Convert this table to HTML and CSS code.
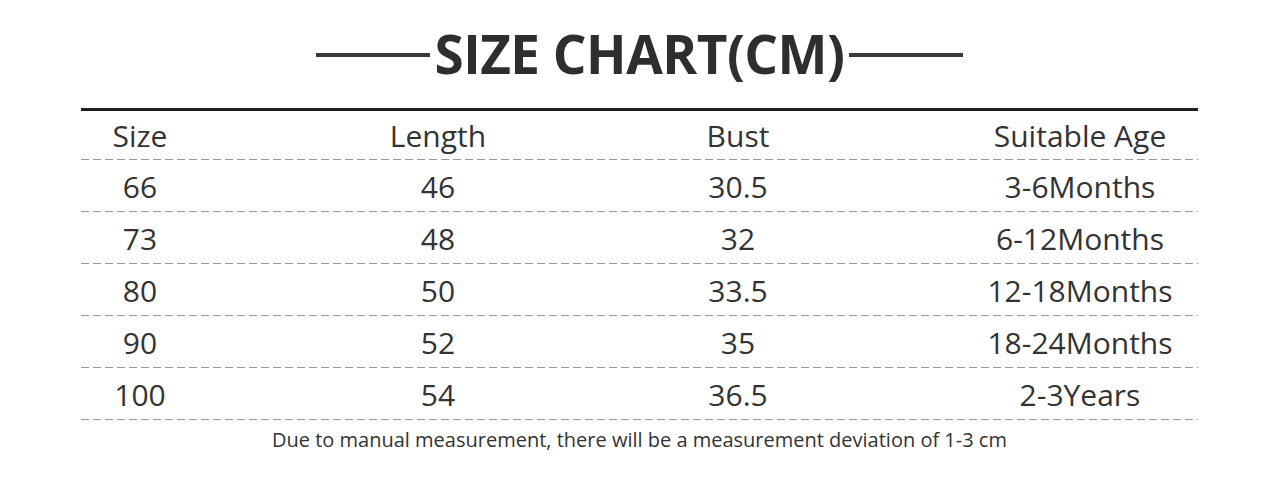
FILE: index.html
```html
<!DOCTYPE html>
<html lang="en">
<head>
    <meta charset="UTF-8">
    <title>Size Chart</title>
    <link rel="stylesheet" href="styles.css">
</head>
<body>
    <main class="chart">
        <h1 class="chart-title">
            <span class="rule"></span>
            <span>SIZE CHART(CM)</span>
            <span class="rule"></span>
        </h1>

        <div class="size-table">
            <div class="row row-head">
                <div class="cell">Size</div>
                <div class="cell">Length</div>
                <div class="cell">Bust</div>
                <div class="cell">Suitable Age</div>
            </div>
            <div class="row">
                <div class="cell">66</div>
                <div class="cell">46</div>
                <div class="cell">30.5</div>
                <div class="cell">3-6Months</div>
            </div>
            <div class="row">
                <div class="cell">73</div>
                <div class="cell">48</div>
                <div class="cell">32</div>
                <div class="cell">6-12Months</div>
            </div>
            <div class="row">
                <div class="cell">80</div>
                <div class="cell">50</div>
                <div class="cell">33.5</div>
                <div class="cell">12-18Months</div>
            </div>
            <div class="row">
                <div class="cell">90</div>
                <div class="cell">52</div>
                <div class="cell">35</div>
                <div class="cell">18-24Months</div>
            </div>
            <div class="row">
                <div class="cell">100</div>
                <div class="cell">54</div>
                <div class="cell">36.5</div>
                <div class="cell">2-3Years</div>
            </div>
        </div>

        <p class="note">Due to manual measurement, there will be a measurement deviation of 1-3 cm</p>
    </main>
</body>
</html>
```

FILE: styles.css
```css
* {
    box-sizing: border-box;
}

html,
body {
    margin: 0;
    padding: 0;
    background: #fff;
}

body {
    font-family: "Open Sans", "Noto Sans", sans-serif;
    color: #333;
    width: 1280px;
    height: 486px;
    overflow: hidden;
}

.chart {
    padding: 0 82px 0 81px;
}

.chart-title {
    display: flex;
    justify-content: center;
    align-items: center;
    gap: 4px;
    height: 108px;
    margin: 0;
    padding-bottom: 2px;
    font-size: 53px;
    font-weight: 700;
    letter-spacing: -0.5px;
    color: #2e2e2e;
}

.chart-title .rule {
    width: 114px;
    height: 4px;
    margin-top: 4px;
    background-color: #3a3a3a;
}

.size-table {
    border-top: 3px solid #1e1e1e;
}

.row {
    display: grid;
    grid-template-columns: 118px 478px 122px 399px;
    align-items: center;
    height: 52px;
    font-size: 30px;
    background-image: linear-gradient(to right, #9a9a9a 8px, transparent 8px);
    background-size: 12px 1px;
    background-repeat: repeat-x;
    background-position: left bottom;
}

.row-head {
    height: 49px;
}

.cell {
    text-align: center;
    white-space: nowrap;
}

.cell:nth-child(4) {
    padding-left: 163px;
}

.note {
    margin: 6px 0 0;
    text-align: center;
    font-size: 20px;
}
```
